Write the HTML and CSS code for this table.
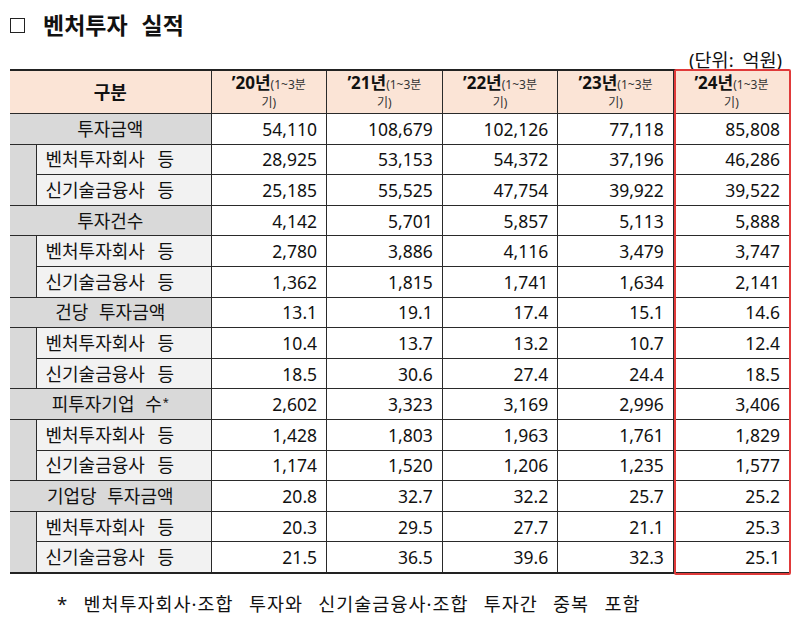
FILE: index.html
```html
<!DOCTYPE html>
<html lang="ko">
<head>
<meta charset="utf-8">
<title>벤처투자 실적</title>
<link rel="stylesheet" href="styles.css">
</head>
<body>
<div class="page">
  <h1 class="title"><span class="box"></span><span class="title-text">벤처투자 실적</span></h1>
  <div class="unit">(단위: 억원)</div>
  <div class="table-wrap">
    <table class="data">
      <colgroup>
        <col class="c-indent"><col class="c-label">
        <col class="c-num"><col class="c-num"><col class="c-num"><col class="c-num"><col class="c-num">
      </colgroup>
      <thead>
        <tr>
          <th colspan="2" class="head-main">구분</th>
          <th><span class="yr">’20년</span><span class="q">(1~3분<br>기)</span></th>
          <th><span class="yr">’21년</span><span class="q">(1~3분<br>기)</span></th>
          <th><span class="yr">’22년</span><span class="q">(1~3분<br>기)</span></th>
          <th><span class="yr">’23년</span><span class="q">(1~3분<br>기)</span></th>
          <th><span class="yr">’24년</span><span class="q">(1~3분<br>기)</span></th>
        </tr>
      </thead>
      <tbody>
        <tr class="grp">
          <td colspan="2" class="main">투자금액</td>
          <td>54,110</td><td>108,679</td><td>102,126</td><td>77,118</td><td>85,808</td>
        </tr>
        <tr>
          <td rowspan="2" class="indent"></td>
          <td class="sub">벤처투자회사 등</td>
          <td>28,925</td><td>53,153</td><td>54,372</td><td>37,196</td><td>46,286</td>
        </tr>
        <tr>
          <td class="sub">신기술금융사 등</td>
          <td>25,185</td><td>55,525</td><td>47,754</td><td>39,922</td><td>39,522</td>
        </tr>

        <tr class="grp">
          <td colspan="2" class="main">투자건수</td>
          <td>4,142</td><td>5,701</td><td>5,857</td><td>5,113</td><td>5,888</td>
        </tr>
        <tr>
          <td rowspan="2" class="indent"></td>
          <td class="sub">벤처투자회사 등</td>
          <td>2,780</td><td>3,886</td><td>4,116</td><td>3,479</td><td>3,747</td>
        </tr>
        <tr>
          <td class="sub">신기술금융사 등</td>
          <td>1,362</td><td>1,815</td><td>1,741</td><td>1,634</td><td>2,141</td>
        </tr>

        <tr class="grp">
          <td colspan="2" class="main">건당 투자금액</td>
          <td>13.1</td><td>19.1</td><td>17.4</td><td>15.1</td><td>14.6</td>
        </tr>
        <tr>
          <td rowspan="2" class="indent"></td>
          <td class="sub">벤처투자회사 등</td>
          <td>10.4</td><td>13.7</td><td>13.2</td><td>10.7</td><td>12.4</td>
        </tr>
        <tr>
          <td class="sub">신기술금융사 등</td>
          <td>18.5</td><td>30.6</td><td>27.4</td><td>24.4</td><td>18.5</td>
        </tr>

        <tr class="grp">
          <td colspan="2" class="main">피투자기업 수<sup>*</sup></td>
          <td>2,602</td><td>3,323</td><td>3,169</td><td>2,996</td><td>3,406</td>
        </tr>
        <tr>
          <td rowspan="2" class="indent"></td>
          <td class="sub">벤처투자회사 등</td>
          <td>1,428</td><td>1,803</td><td>1,963</td><td>1,761</td><td>1,829</td>
        </tr>
        <tr>
          <td class="sub">신기술금융사 등</td>
          <td>1,174</td><td>1,520</td><td>1,206</td><td>1,235</td><td>1,577</td>
        </tr>

        <tr class="grp">
          <td colspan="2" class="main">기업당 투자금액</td>
          <td>20.8</td><td>32.7</td><td>32.2</td><td>25.7</td><td>25.2</td>
        </tr>
        <tr>
          <td rowspan="2" class="indent"></td>
          <td class="sub">벤처투자회사 등</td>
          <td>20.3</td><td>29.5</td><td>27.7</td><td>21.1</td><td>25.3</td>
        </tr>
        <tr class="last">
          <td class="sub">신기술금융사 등</td>
          <td>21.5</td><td>36.5</td><td>39.6</td><td>32.3</td><td>25.1</td>
        </tr>
      </tbody>
    </table>
    <div class="highlight"></div>
  </div>
  <p class="note">* 벤처투자회사·조합 투자와 신기술금융사·조합 투자간 중복 포함</p>
</div>
</body>
</html>
```

FILE: styles.css
```css
html, body {
  margin: 0;
  padding: 0;
  background: #ffffff;
}

body {
  font-family: "Noto Sans", "Noto Sans CJK KR", sans-serif;
  color: #111111;
}

.page {
  padding: 8px 11px 0 10px;
}

.title {
  margin: 0;
  display: flex;
  align-items: center;
  height: 34px;
  font-size: 23px;
  font-weight: 700;
  line-height: 34px;
}

.box {
  width: 13px;
  height: 13px;
  border: 1px solid #222222;
  margin-right: 18px;
  margin-top: 1px;
}

.title-text {
  word-spacing: 8px;
}

.unit {
  margin-top: 9px;
  height: 18px;
  line-height: 18px;
  font-size: 18.5px;
  text-align: right;
  padding-right: 7px;
  word-spacing: 4px;
}

.table-wrap {
  position: relative;
  width: 779px;
}

.data {
  width: 779px;
  border-collapse: collapse;
  table-layout: fixed;
  border-top: 2px solid #222222;
  border-bottom: 2px solid #222222;
}

.c-indent { width: 26px; }
.c-label { width: 175px; }
.c-num { width: 115.6px; }

.data th,
.data td {
  border: 1px solid #2a2a2a;
  padding: 0;
}

.data tr > :first-child {
  border-left: none;
}

.data tr > :last-child {
  border-right: none;
}

.data thead th {
  height: 42px;
  background: #fbe4d6;
  font-weight: 700;
  text-align: center;
  vertical-align: middle;
  line-height: 17px;
  padding-top: 0;
}

.head-main {
  font-size: 18px;
}

.yr {
  font-size: 17px;
  font-weight: 700;
}

.q {
  font-size: 12px;
  font-weight: 400;
  color: #333333;
}

.data tbody td {
  height: 29.6px;
  font-size: 17.5px;
  line-height: 20px;
  text-align: right;
  padding-right: 9px;
  vertical-align: middle;
}

.data tbody td.main {
  background: #d9d9d9;
  text-align: center;
  padding-right: 0;
  font-size: 18px;
  word-spacing: 6px;
}

.data tbody td.main sup {
  font-size: 11px;
  vertical-align: 5px;
  line-height: 0;
  margin-left: 1px;
}

.data tbody td.sub {
  background: #f2f2f2;
  text-align: left;
  padding-left: 9px;
  padding-right: 0;
  font-size: 18px;
  word-spacing: 8px;
}

.data tbody td.indent {
  background: #d9d9d9;
  padding: 0;
  border-top-color: #eeeeee;
  border-bottom-color: #2a2a2a;
}

.highlight {
  position: absolute;
  top: 0;
  bottom: -1px;
  right: -2px;
  width: 113px;
  border: 2px solid #e03a3a;
  border-radius: 2px;
  pointer-events: none;
}

.note {
  margin: 18px 0 0 47px;
  font-size: 18.5px;
  line-height: 24px;
  word-spacing: 9.5px;
  letter-spacing: 1px;
}
```
